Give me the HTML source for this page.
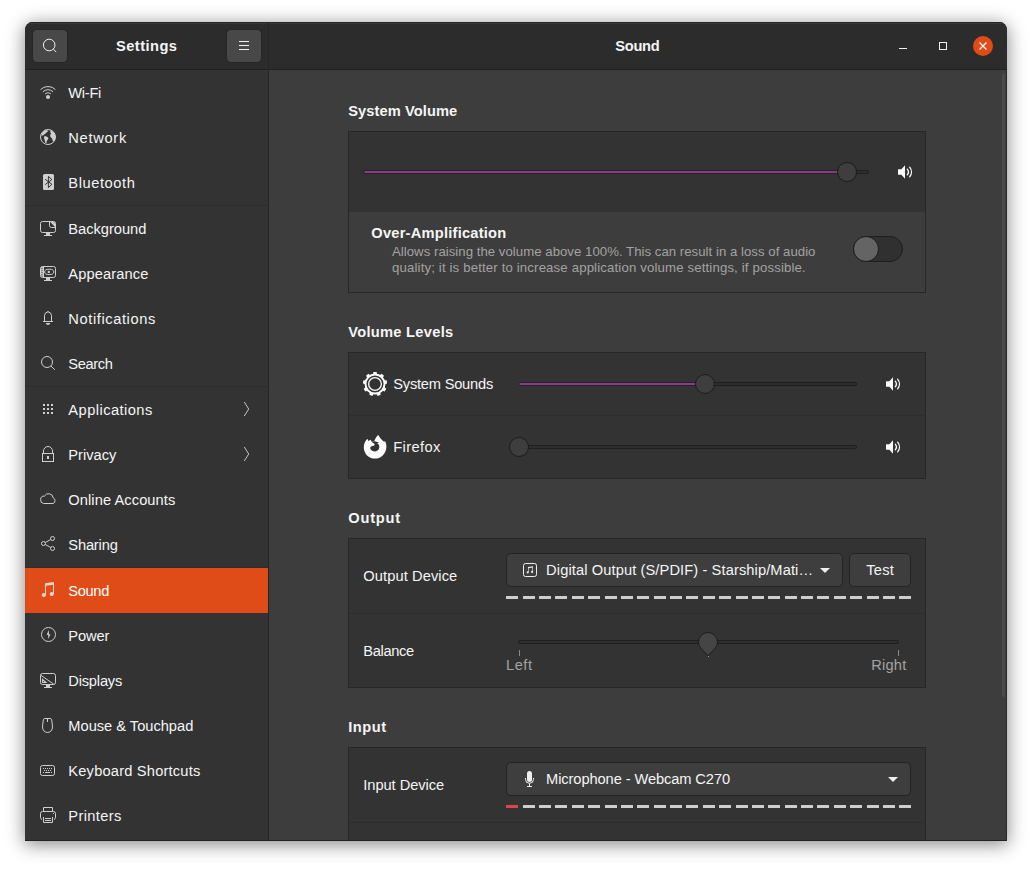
<!DOCTYPE html>
<html lang="en"><head><meta charset="utf-8"><title>Settings - Sound</title>
<style>
html,body{margin:0;padding:0}
body{width:1032px;height:869px;overflow:hidden;background:#fff;position:relative;font-family:"Liberation Sans","DejaVu Sans",sans-serif}
#win{position:absolute;left:25px;top:22px;width:982px;height:819px;border-radius:8px 8px 0 0;overflow:hidden;background:#3d3d3d}
#shadow{position:absolute;left:25px;top:22px;width:982px;height:819px;border-radius:8px 8px 0 0;box-shadow:0 3px 18px 1px rgba(0,0,0,.45)}
#in{position:absolute;left:-25px;top:-22px;width:1032px;height:869px}
#in div,#in i,#in svg,.t{position:absolute;display:block}
.t{white-space:nowrap;line-height:20px}
#hdr{left:25px;top:22px;width:982px;height:47px;background:#2c2c2c;border-bottom:1px solid #212121;box-shadow:inset 0 1px 0 #262626,inset 0 2px 0 #383838}
#side{left:25px;top:70px;width:243px;height:771px;background:#333}
#vsep{left:268px;top:22px;width:1px;height:819px;background:#262626}
.sel{left:25px;width:243px;height:45px;background:#e04c18}
.ssep{left:25px;width:243px;height:1px;background:#2d2d2d}
.hbtn{width:34px;height:32px;top:29px;border:1px solid #272727;border-radius:5px;background:#484848}
.box{left:348px;width:576px;background:#333;border:1px solid #272727}
.rsep{left:349px;width:576px;height:1px;background:#2d2d2d}
.trough{height:2px;border:1px solid #1f1f1f;border-radius:2px;background:#2e2e2e}
.fill{height:2px;border:1px solid #311b32;border-radius:2px;background:#80427a}
.knob{width:18px;height:18px;border:1px solid #1b1b1b;border-radius:50%;background:#3e3e3e}
.btn{height:32px;top:553px;border:1px solid #232323;border-radius:5px;background:#3e3e3e}
.dash{width:12px;height:3px}
.tick{width:1px;height:6px;top:650px;background:#8a8a8a}
</style></head>
<body>
<div id="shadow"></div>
<div id="win"><div id="in">
<div id="side"></div>
<div id="hdr"></div>
<div id="vsep"></div>
<div class="hbtn" style="left:32px"></div>
<div class="hbtn" style="left:226px"></div>
<svg style="left:42px;top:38px" width="16" height="16" viewBox="0 0 16 16"><circle cx="7.2" cy="7" r="5.8" fill="none" stroke="#eeeeee" stroke-width="1" stroke-width="1.1"/><path d="M11.4 11.2L14.2 14.1" fill="none" stroke="#eeeeee" stroke-width="1" stroke-width="1.8"/></svg>
<i style="left:239px;top:41px;width:10px;height:1px;background:#f0f0f0"></i><i style="left:239px;top:45px;width:10px;height:1px;background:#f0f0f0"></i><i style="left:239px;top:49px;width:10px;height:1px;background:#f0f0f0"></i>
<i style="left:899px;top:48px;width:8px;height:1px;background:#f0f0f0"></i>
<i style="left:939px;top:42px;width:6px;height:6px;border:1px solid #f0f0f0"></i>
<div style="left:973px;top:36px;width:20px;height:20px;border-radius:50%;background:#e04c18"></div>
<svg style="left:973px;top:36px" width="20" height="20" viewBox="0 0 20 20"><path d="M6.5 6.5l7 7m0-7l-7 7" stroke="#fff" stroke-width="1.15" fill="none"/></svg>
<svg style="left:40px;top:85px" width="16" height="16" viewBox="0 0 16 16"><path d="M0.58 4.58A10.5 10.5 0 0 1 15.42 4.58M2.84 6.84A7.3 7.3 0 0 1 13.16 6.84M5.03 9.03A4.2 4.2 0 0 1 10.97 9.03" fill="none" stroke="#cfcfcf" stroke-width="1" stroke-width="1.1"/><circle cx="8" cy="12" r="2" fill="#cfcfcf"/></svg>
<svg style="left:40px;top:129px" width="16" height="16" viewBox="0 0 16 16"><circle cx="8" cy="8" r="7.5" fill="none" stroke="#cfcfcf" stroke-width="1"/><path d="M1.2 6.4C1.8 3.8 3.8 1.6 6.6 0.9L7.4 1.2L7.9 2.6L6.4 3.4L5.6 4.6L4 5.4L3.2 6.4Z" fill="#cfcfcf"/><path d="M4.2 7.3L6 7.2L8.2 8.6L8.3 10L7 11.6L6.4 13.9L5.4 14.1L4.8 11.2L4 9.4Z" fill="#cfcfcf"/><path d="M10.6 1.2C13.5 2.2 15.4 4.9 15.4 8C15.4 9.6 14.9 11 14.1 12.2L12.6 11.8L12.2 9.6L10.6 8.2L10.1 6.2L11 4.4L10.2 2.6Z" fill="#cfcfcf"/></svg>
<svg style="left:40px;top:174px" width="16" height="16" viewBox="0 0 16 16"><rect x="3" y="0" width="11" height="16" rx="1.6" fill="#cfcfcf"/><path d="M5.2 5.3L11.9 10.3L8.4 13.6V2.4L11.9 5.5L5.2 10.6" fill="none" stroke="#333" stroke-width="1"/></svg>
<svg style="left:40px;top:220px" width="16" height="16" viewBox="0 0 16 16"><rect x="0.5" y="1.5" width="15" height="11" rx="2" fill="none" stroke="#cfcfcf" stroke-width="1"/><path d="M6 13h4v2h2v1H4v-1h2z" fill="#cfcfcf"/><path d="M9.5 1.5V5.5Q9.5 7.5 11.5 7.5H15.5" fill="none" stroke="#cfcfcf" stroke-width="1"/><path d="M10.3 2H13.5Q15 2 15 3.5V6.9z" fill="#cfcfcf"/></svg>
<svg style="left:40px;top:265px" width="16" height="16" viewBox="0 0 16 16"><rect x="0.5" y="1.5" width="15" height="11" rx="2" fill="none" stroke="#cfcfcf" stroke-width="1"/><path d="M6 13h4v2h2v1H4v-1h2z" fill="#cfcfcf"/><rect x="1" y="2" width="3" height="10" fill="#cfcfcf"/><path d="M1.2 3.3h1.6M1.2 5.3h1.6M1.2 7.3h1.6M1.2 9.3h1.6M1.2 11.1h1.6" stroke="#333" stroke-width="0.7"/><ellipse cx="9.2" cy="6.9" rx="4.6" ry="2.7" fill="none" stroke="#cfcfcf" stroke-width="1" stroke-width="0.9"/><circle cx="8.8" cy="6.9" r="1.2" fill="#cfcfcf"/></svg>
<svg style="left:40px;top:310px" width="16" height="16" viewBox="0 0 16 16"><path d="M4.5 11.5V5.6Q4.5 2.4 8 1.8Q11.5 2.4 11.5 5.6V11.5" fill="none" stroke="#cfcfcf" stroke-width="1"/><path d="M3 11.5H13" fill="none" stroke="#cfcfcf" stroke-width="1"/><circle cx="8" cy="1.6" r="0.7" fill="#cfcfcf"/><path d="M5.9 13h4.2a2.1 2.1 0 0 1-4.2 0z" fill="#cfcfcf"/></svg>
<svg style="left:40px;top:355px" width="16" height="16" viewBox="0 0 16 16"><circle cx="7" cy="7" r="5.5" fill="none" stroke="#cfcfcf" stroke-width="1"/><path d="M11 11L14.8 14.8" fill="none" stroke="#cfcfcf" stroke-width="1" stroke-width="1.5"/></svg>
<svg style="left:40px;top:401px" width="16" height="16" viewBox="0 0 16 16"><rect x="3" y="3" width="2" height="2" fill="#cfcfcf"/><rect x="7" y="3" width="2" height="2" fill="#cfcfcf"/><rect x="11" y="3" width="2" height="2" fill="#cfcfcf"/><rect x="3" y="7" width="2" height="2" fill="#cfcfcf"/><rect x="7" y="7" width="2" height="2" fill="#cfcfcf"/><rect x="11" y="7" width="2" height="2" fill="#cfcfcf"/><rect x="3" y="11" width="2" height="2" fill="#cfcfcf"/><rect x="7" y="11" width="2" height="2" fill="#cfcfcf"/><rect x="11" y="11" width="2" height="2" fill="#cfcfcf"/></svg>
<svg style="left:40px;top:446px" width="16" height="16" viewBox="0 0 16 16"><rect x="2.5" y="7.5" width="11" height="8" fill="none" stroke="#cfcfcf" stroke-width="1"/><path d="M3.5 7.5V5a4.5 4.5 0 0 1 9 0V7.5" fill="none" stroke="#cfcfcf" stroke-width="1"/><rect x="7" y="10" width="2" height="3" fill="#cfcfcf"/></svg>
<svg style="left:40px;top:491px" width="16" height="16" viewBox="0 0 16 16"><path d="M3.6 12.5A3.4 3.7 0 0 1 4.4 5.1A4.7 4.7 0 0 1 13.2 7A2.9 2.9 0 0 1 13 12.5Z" fill="none" stroke="#cfcfcf" stroke-width="1"/></svg>
<svg style="left:40px;top:536px" width="16" height="16" viewBox="0 0 16 16"><circle cx="3.5" cy="7.5" r="2" fill="none" stroke="#cfcfcf" stroke-width="1"/><circle cx="12.5" cy="2.5" r="2" fill="none" stroke="#cfcfcf" stroke-width="1"/><circle cx="12.5" cy="12.5" r="2" fill="none" stroke="#cfcfcf" stroke-width="1"/><path d="M5.3 6.5L10.7 3.5M5.3 8.5L10.7 11.5" fill="none" stroke="#cfcfcf" stroke-width="1"/></svg>
<div class="sel" style="top:568px"></div>
<svg style="left:40px;top:582px" width="16" height="16" viewBox="0 0 16 16"><path d="M5 1.3L14 0V12H13V2.7L6 3.8V13H5z" fill="#f7d3c6"/><circle cx="3.8" cy="13" r="2.1" fill="#f7d3c6"/><circle cx="11.8" cy="12" r="2.1" fill="#f7d3c6"/></svg>
<svg style="left:40px;top:626px" width="17" height="17" viewBox="0 0 17 17"><circle cx="8.5" cy="8.5" r="7" fill="none" stroke="#cfcfcf" stroke-width="1"/><path d="M8.9 4L6.6 8.7H8.2V13L10.5 8.2H8.9z" fill="#cfcfcf"/></svg>
<svg style="left:40px;top:672px" width="16" height="16" viewBox="0 0 16 16"><rect x="0.5" y="1.5" width="15" height="11" rx="2" fill="none" stroke="#cfcfcf" stroke-width="1"/><path d="M6 13h4v2h2v1H4v-1h2z" fill="#cfcfcf"/><path d="M0.7 3.2L13.8 12.2" fill="none" stroke="#cfcfcf" stroke-width="1"/><path d="M2 6.3V11H7.4z" fill="#cfcfcf"/><circle cx="3.4" cy="9.5" r="0.6" fill="#333"/></svg>
<svg style="left:40px;top:717px" width="16" height="16" viewBox="0 0 16 16"><path d="M5 1.5H10C11.5 1.5 11.8 2.5 11.8 4C12 6 12.5 8 12.5 10C12.5 13 10.5 15.5 7.5 15.5C4.5 15.5 2.5 13 2.5 10C2.5 8 3 6 3.2 4C3.2 2.5 3.5 1.5 5 1.5ZM7.5 1.5V5" fill="none" stroke="#cfcfcf" stroke-width="1"/></svg>
<svg style="left:40px;top:762px" width="16" height="16" viewBox="0 0 16 16"><rect x="0.5" y="3.5" width="14" height="10" rx="2" fill="none" stroke="#cfcfcf" stroke-width="1"/><rect x="3" y="6" width="1" height="1" fill="#cfcfcf"/><rect x="5" y="6" width="1" height="1" fill="#cfcfcf"/><rect x="7" y="6" width="1" height="1" fill="#cfcfcf"/><rect x="9" y="6" width="1" height="1" fill="#cfcfcf"/><rect x="11" y="6" width="1" height="1" fill="#cfcfcf"/><rect x="4" y="8" width="1" height="1" fill="#cfcfcf"/><rect x="6" y="8" width="1" height="1" fill="#cfcfcf"/><rect x="8" y="8" width="1" height="1" fill="#cfcfcf"/><rect x="10" y="8" width="1" height="1" fill="#cfcfcf"/><rect x="3" y="10" width="1" height="1" fill="#cfcfcf"/><rect x="5" y="10" width="5" height="1" fill="#cfcfcf"/><rect x="11" y="10" width="1" height="1" fill="#cfcfcf"/></svg>
<svg style="left:40px;top:807px" width="16" height="16" viewBox="0 0 16 16"><path d="M3.5 4.5V0.5H12.5V4.5M2 12.5Q0.5 12 0.5 10.5V6.5Q0.5 4.5 2.5 4.5H13.5Q15.5 4.5 15.5 6.5V10.5Q15.5 12 14 12.5M3.5 10V15.5H12.5V10M5 11.5H11M5 13.5H11" fill="none" stroke="#cfcfcf" stroke-width="1"/><rect x="13" y="6" width="1" height="1" fill="#cfcfcf"/></svg>
<div class="ssep" style="top:205px"></div>
<div class="ssep" style="top:386px"></div>
<div class="ssep" style="top:567px"></div>
<svg style="left:238px;top:399px" width="16" height="20" viewBox="0 0 16 20"><path d="M6.3 3L10.7 10L6.3 17" fill="none" stroke="#c4c4c4" stroke-width="1"/></svg>
<svg style="left:238px;top:444px" width="16" height="20" viewBox="0 0 16 20"><path d="M6.3 3L10.7 10L6.3 17" fill="none" stroke="#c4c4c4" stroke-width="1"/></svg>
<div style="left:1002px;top:73px;width:3px;height:624px;border-radius:2px;background:#4a4a4a"></div>
<div class="box" style="top:131px;height:160px"></div>
<div style="left:349px;top:212px;width:576px;height:80px;background:#3d3d3d"></div>
<div class="trough" style="left:363px;top:170px;width:504px"></div>
<div class="fill" style="left:363px;top:170px;width:482px"></div>
<div class="knob" style="left:837px;top:162px"></div>
<svg style="left:897px;top:164px" width="16" height="16" viewBox="0 0 16 16"><path d="M1.6 5.2H4.4L8 1.3V14.7L4.4 10.8H1.6Q1 10.8 1 10.2V5.8Q1 5.2 1.6 5.2z" fill="#fafafa"/><path d="M10.26 5.15A4.43 4.43 0 0 1 10.26 10.85M12.64 3.16A7.53 7.53 0 0 1 12.64 12.84" fill="none" stroke="#fafafa" stroke-width="1.35" stroke-linecap="round"/></svg>
<div style="left:853px;top:236px;width:48px;height:24px;border:1px solid #1e1e1e;border-radius:13px;background:#303030"></div>
<div style="left:853px;top:236px;width:24px;height:24px;border:1px solid #1e1e1e;border-radius:50%;background:#646464"></div>
<div class="box" style="top:352px;height:125px"></div>
<div class="rsep" style="top:415px"></div>
<svg style="left:363px;top:372px" width="24" height="24" viewBox="0 0 24 24"><path d="M10 2.6L10.4 -0.1H13.6L14 2.6z" transform="rotate(0 12 12)" fill="#fcfcfc"/><path d="M10 2.6L10.4 -0.1H13.6L14 2.6z" transform="rotate(40 12 12)" fill="#fcfcfc"/><path d="M10 2.6L10.4 -0.1H13.6L14 2.6z" transform="rotate(80 12 12)" fill="#fcfcfc"/><path d="M10 2.6L10.4 -0.1H13.6L14 2.6z" transform="rotate(120 12 12)" fill="#fcfcfc"/><path d="M10 2.6L10.4 -0.1H13.6L14 2.6z" transform="rotate(160 12 12)" fill="#fcfcfc"/><path d="M10 2.6L10.4 -0.1H13.6L14 2.6z" transform="rotate(200 12 12)" fill="#fcfcfc"/><path d="M10 2.6L10.4 -0.1H13.6L14 2.6z" transform="rotate(240 12 12)" fill="#fcfcfc"/><path d="M10 2.6L10.4 -0.1H13.6L14 2.6z" transform="rotate(280 12 12)" fill="#fcfcfc"/><path d="M10 2.6L10.4 -0.1H13.6L14 2.6z" transform="rotate(320 12 12)" fill="#fcfcfc"/><circle cx="12" cy="12" r="9.5" fill="none" stroke="#fcfcfc" stroke-width="1.9"/><circle cx="12" cy="12" r="6.35" fill="none" stroke="#fcfcfc" stroke-width="1.3"/></svg>
<svg style="left:363px;top:435px" width="24" height="24" viewBox="0 0 24 24"><path d="M4.4 3.8L5.4 5.9L7.5 4.8L8.6 6.4L11.3 6L12.2 4C13 2.4 14 0.9 15.3 -0.1C16.5 2.5 18.5 4.5 20.6 6.6L22.3 6.6C23.1 8.2 23.5 10 23.4 11.9C23.2 18.4 18.2 23.6 12 23.6C5.8 23.6 0.8 18.6 0.8 12.4C0.8 8.9 2.2 5.9 4.4 3.8Z" fill="#fcfcfc"/><path d="M8.6 6.4C10.5 6 13.5 6 16.6 8.3C15.4 7.9 14.6 7.9 14 8.1C16.6 9.6 17 12.5 15.6 14.6C14.3 16.5 11.5 17 9.2 15.7C7.3 14.6 6.6 12.8 7.7 11.7C8.6 10.8 10.4 11 11.4 10.2C12 9.6 11.6 8.8 10.6 8.2C9.8 7.7 9 7.2 8.6 6.4Z" fill="#333"/></svg>
<div class="trough" style="left:518px;top:382px;width:337px"></div>
<div class="fill" style="left:518px;top:382px;width:185px"></div>
<div class="knob" style="left:695px;top:374px"></div>
<div class="trough" style="left:518px;top:445px;width:337px"></div>
<div class="knob" style="left:509px;top:437px"></div>
<svg style="left:885px;top:376px" width="16" height="16" viewBox="0 0 16 16"><path d="M1.6 5.2H4.4L8 1.3V14.7L4.4 10.8H1.6Q1 10.8 1 10.2V5.8Q1 5.2 1.6 5.2z" fill="#fafafa"/><path d="M10.26 5.15A4.43 4.43 0 0 1 10.26 10.85M12.64 3.16A7.53 7.53 0 0 1 12.64 12.84" fill="none" stroke="#fafafa" stroke-width="1.35" stroke-linecap="round"/></svg>
<svg style="left:885px;top:439px" width="16" height="16" viewBox="0 0 16 16"><path d="M1.6 5.2H4.4L8 1.3V14.7L4.4 10.8H1.6Q1 10.8 1 10.2V5.8Q1 5.2 1.6 5.2z" fill="#fafafa"/><path d="M10.26 5.15A4.43 4.43 0 0 1 10.26 10.85M12.64 3.16A7.53 7.53 0 0 1 12.64 12.84" fill="none" stroke="#fafafa" stroke-width="1.35" stroke-linecap="round"/></svg>
<div class="box" style="top:538px;height:148px"></div>
<div class="rsep" style="top:613px"></div>
<div class="btn" style="left:506px;width:335px"></div>
<div class="btn" style="left:849px;width:60px"></div>
<svg style="left:522px;top:562px" width="16" height="16" viewBox="0 0 16 16"><rect x="1.5" y="1.5" width="13" height="13" rx="2" fill="none" stroke="#eeeeee" stroke-width="1"/><path d="M6 5.1L11 4.2V9.8H10.4V5.6L6.6 6.3V10.3H6z" fill="#eeeeee"/><circle cx="5.7" cy="10.3" r="1.1" fill="#eeeeee"/><circle cx="10.1" cy="9.9" r="1.1" fill="#eeeeee"/></svg>
<svg style="left:820px;top:568px" width="10" height="5" viewBox="0 0 10 5"><path d="M0 0h10L5 5z" fill="#eee"/></svg>
<i class="dash" style="left:506.25px;top:596px;background:#cecece"></i><i class="dash" style="left:522.62px;top:596px;background:#cecece"></i><i class="dash" style="left:539.00px;top:596px;background:#cecece"></i><i class="dash" style="left:555.38px;top:596px;background:#cecece"></i><i class="dash" style="left:571.75px;top:596px;background:#cecece"></i><i class="dash" style="left:588.12px;top:596px;background:#cecece"></i><i class="dash" style="left:604.50px;top:596px;background:#cecece"></i><i class="dash" style="left:620.88px;top:596px;background:#cecece"></i><i class="dash" style="left:637.25px;top:596px;background:#cecece"></i><i class="dash" style="left:653.62px;top:596px;background:#cecece"></i><i class="dash" style="left:670.00px;top:596px;background:#cecece"></i><i class="dash" style="left:686.38px;top:596px;background:#cecece"></i><i class="dash" style="left:702.75px;top:596px;background:#cecece"></i><i class="dash" style="left:719.12px;top:596px;background:#cecece"></i><i class="dash" style="left:735.50px;top:596px;background:#cecece"></i><i class="dash" style="left:751.88px;top:596px;background:#cecece"></i><i class="dash" style="left:768.25px;top:596px;background:#cecece"></i><i class="dash" style="left:784.62px;top:596px;background:#cecece"></i><i class="dash" style="left:801.00px;top:596px;background:#cecece"></i><i class="dash" style="left:817.38px;top:596px;background:#cecece"></i><i class="dash" style="left:833.75px;top:596px;background:#cecece"></i><i class="dash" style="left:850.12px;top:596px;background:#cecece"></i><i class="dash" style="left:866.50px;top:596px;background:#cecece"></i><i class="dash" style="left:882.88px;top:596px;background:#cecece"></i><i class="dash" style="left:899.25px;top:596px;background:#cecece"></i>
<div class="trough" style="left:518px;top:640px;width:379px"></div>
<svg style="left:698px;top:632px" width="20" height="25" viewBox="0 0 20 25"><path d="M10 23.5L3.25 16.68A9.5 9.5 0 1 1 16.75 16.68Z" fill="#454545" stroke="#1d1d1d" stroke-width="1"/></svg>
<i class="tick" style="left:519px"></i><i style="left:708px;top:656px;width:1px;height:1px;background:#999"></i><i class="tick" style="left:898px"></i>
<div class="box" style="top:747px;height:148px"></div>
<div class="rsep" style="top:822px"></div>
<div class="btn" style="left:506px;width:403px;top:762px"></div>
<svg style="left:522px;top:771px" width="16" height="16" viewBox="0 0 16 16"><rect x="5" y="0" width="5" height="11" rx="2.5" fill="#eeeeee"/><path d="M3.5 7V8.3a4 4 0 0 0 8 0V7M7.5 12.3V15.5M5 15.5H10" fill="none" stroke="#eeeeee" stroke-width="1"/></svg>
<svg style="left:888px;top:777px" width="10" height="5" viewBox="0 0 10 5"><path d="M0 0h10L5 5z" fill="#eee"/></svg>
<i class="dash" style="left:506.25px;top:805px;background:#de444f"></i><i class="dash" style="left:522.62px;top:805px;background:#cecece"></i><i class="dash" style="left:539.00px;top:805px;background:#cecece"></i><i class="dash" style="left:555.38px;top:805px;background:#cecece"></i><i class="dash" style="left:571.75px;top:805px;background:#cecece"></i><i class="dash" style="left:588.12px;top:805px;background:#cecece"></i><i class="dash" style="left:604.50px;top:805px;background:#cecece"></i><i class="dash" style="left:620.88px;top:805px;background:#cecece"></i><i class="dash" style="left:637.25px;top:805px;background:#cecece"></i><i class="dash" style="left:653.62px;top:805px;background:#cecece"></i><i class="dash" style="left:670.00px;top:805px;background:#cecece"></i><i class="dash" style="left:686.38px;top:805px;background:#cecece"></i><i class="dash" style="left:702.75px;top:805px;background:#cecece"></i><i class="dash" style="left:719.12px;top:805px;background:#cecece"></i><i class="dash" style="left:735.50px;top:805px;background:#cecece"></i><i class="dash" style="left:751.88px;top:805px;background:#cecece"></i><i class="dash" style="left:768.25px;top:805px;background:#cecece"></i><i class="dash" style="left:784.62px;top:805px;background:#cecece"></i><i class="dash" style="left:801.00px;top:805px;background:#cecece"></i><i class="dash" style="left:817.38px;top:805px;background:#cecece"></i><i class="dash" style="left:833.75px;top:805px;background:#cecece"></i><i class="dash" style="left:850.12px;top:805px;background:#cecece"></i><i class="dash" style="left:866.50px;top:805px;background:#cecece"></i><i class="dash" style="left:882.88px;top:805px;background:#cecece"></i><i class="dash" style="left:899.25px;top:805px;background:#cecece"></i>
<span class="t" id="t_settings" style="left:116.00px;top:35.67px;font-size:14.67px;color:#f5f5f5;font-weight:bold;letter-spacing:0.453px;">Settings</span>
<span class="t" id="t_sound" style="left:615.25px;top:35.67px;font-size:14.67px;color:#f5f5f5;font-weight:bold;letter-spacing:-0.298px;">Sound</span>
<span class="t" id="s0" style="left:68.30px;top:82.72px;font-size:14.67px;color:#f5f5f5;letter-spacing:-0.297px;">Wi-Fi</span>
<span class="t" id="s1" style="left:68.30px;top:127.72px;font-size:14.67px;color:#f5f5f5;letter-spacing:0.706px;">Network</span>
<span class="t" id="s2" style="left:68.30px;top:172.72px;font-size:14.67px;color:#f5f5f5;letter-spacing:0.570px;">Bluetooth</span>
<span class="t" id="s3" style="left:68.30px;top:218.72px;font-size:14.67px;color:#f5f5f5;letter-spacing:-0.026px;">Background</span>
<span class="t" id="s4" style="left:68.30px;top:263.72px;font-size:14.67px;color:#f5f5f5;letter-spacing:0.106px;">Appearance</span>
<span class="t" id="s5" style="left:68.30px;top:308.72px;font-size:14.67px;color:#f5f5f5;letter-spacing:0.596px;">Notifications</span>
<span class="t" id="s6" style="left:68.30px;top:353.72px;font-size:14.67px;color:#f5f5f5;letter-spacing:-0.391px;">Search</span>
<span class="t" id="s7" style="left:68.30px;top:399.72px;font-size:14.67px;color:#f5f5f5;letter-spacing:0.452px;">Applications</span>
<span class="t" id="s8" style="left:68.30px;top:444.72px;font-size:14.67px;color:#f5f5f5;letter-spacing:-0.010px;">Privacy</span>
<span class="t" id="s9" style="left:68.30px;top:489.72px;font-size:14.67px;color:#f5f5f5;letter-spacing:0.077px;">Online Accounts</span>
<span class="t" id="s10" style="left:68.30px;top:534.72px;font-size:14.67px;color:#f5f5f5;letter-spacing:-0.172px;">Sharing</span>
<span class="t" id="s11" style="left:68.30px;top:580.72px;font-size:14.67px;color:#ffffff;letter-spacing:-0.348px;">Sound</span>
<span class="t" id="s12" style="left:68.30px;top:625.72px;font-size:14.67px;color:#f5f5f5;letter-spacing:-0.137px;">Power</span>
<span class="t" id="s13" style="left:68.30px;top:670.72px;font-size:14.67px;color:#f5f5f5;letter-spacing:-0.199px;">Displays</span>
<span class="t" id="s14" style="left:68.30px;top:715.72px;font-size:14.67px;color:#f5f5f5;letter-spacing:-0.015px;">Mouse &amp; Touchpad</span>
<span class="t" id="s15" style="left:68.30px;top:760.72px;font-size:14.67px;color:#f5f5f5;letter-spacing:0.192px;">Keyboard Shortcuts</span>
<span class="t" id="s16" style="left:68.30px;top:805.72px;font-size:14.67px;color:#f5f5f5;letter-spacing:0.357px;">Printers</span>
<span class="t" id="h1" style="left:348.20px;top:100.62px;font-size:14.67px;color:#f5f5f5;font-weight:bold;letter-spacing:0.078px;">System Volume</span>
<span class="t" id="h2" style="left:348.20px;top:321.92px;font-size:14.67px;color:#f5f5f5;font-weight:bold;letter-spacing:0.286px;">Volume Levels</span>
<span class="t" id="h3" style="left:348.20px;top:507.92px;font-size:14.67px;color:#f5f5f5;font-weight:bold;letter-spacing:0.794px;">Output</span>
<span class="t" id="h4" style="left:348.20px;top:716.92px;font-size:14.67px;color:#f5f5f5;font-weight:bold;letter-spacing:0.547px;">Input</span>
<span class="t" id="oa" style="left:371.25px;top:222.92px;font-size:14.67px;color:#f5f5f5;font-weight:bold;letter-spacing:0.228px;">Over-Amplification</span>
<span class="t" id="d1" style="left:392.00px;top:241.68px;font-size:13.2px;color:#a3a3a3;letter-spacing:0.031px;">Allows raising the volume above 100%. This can result in a loss of audio</span>
<span class="t" id="d2" style="left:392.00px;top:257.93px;font-size:13.2px;color:#a3a3a3;letter-spacing:0.153px;">quality; it is better to increase application volume settings, if possible.</span>
<span class="t" id="ss" style="left:393.25px;top:374.17px;font-size:14.67px;color:#f5f5f5;letter-spacing:-0.221px;">System Sounds</span>
<span class="t" id="ff" style="left:393.25px;top:436.92px;font-size:14.67px;color:#f5f5f5;letter-spacing:0.367px;">Firefox</span>
<span class="t" id="od" style="left:363.25px;top:566.17px;font-size:14.67px;color:#f5f5f5;letter-spacing:0.094px;">Output Device</span>
<span class="t" id="bal" style="left:363.25px;top:641.17px;font-size:14.67px;color:#f5f5f5;letter-spacing:-0.328px;">Balance</span>
<span class="t" id="idv" style="left:363.25px;top:774.92px;font-size:14.67px;color:#f5f5f5;letter-spacing:-0.043px;">Input Device</span>
<span class="t" id="c1" style="left:546.10px;top:559.92px;font-size:14.67px;color:#f5f5f5;letter-spacing:0.101px;">Digital Output (S/PDIF) - Starship/Mati…</span>
<span class="t" id="test" style="left:866.25px;top:559.92px;font-size:14.67px;color:#f5f5f5;letter-spacing:0.203px;">Test</span>
<span class="t" id="c2" style="left:546.10px;top:768.67px;font-size:14.67px;color:#f5f5f5;letter-spacing:-0.099px;">Microphone - Webcam C270</span>
<span class="t" id="left" style="left:506.00px;top:654.92px;font-size:14.67px;color:#a3a3a3;letter-spacing:0.516px;">Left</span>
<span class="t" id="right" style="left:871.25px;top:654.92px;font-size:14.67px;color:#a3a3a3;letter-spacing:0.195px;">Right</span>
<div style="left:25px;top:840px;width:982px;height:1px;background:#222"></div>
<div style="left:1006px;top:70px;width:1px;height:771px;background:#2a2a2a"></div>
</div></div>
</body></html>
